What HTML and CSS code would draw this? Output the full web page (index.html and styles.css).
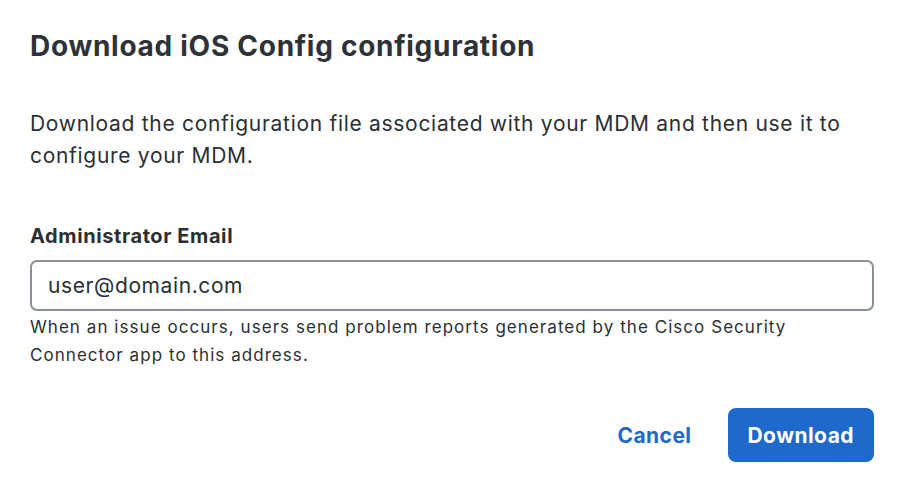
FILE: index.html
```html
<!DOCTYPE html>
<html>
<head>
<meta charset="utf-8">
<link rel="stylesheet" href="styles.css">
</head>
<body>
<div class="dialog">
  <h1 class="title">Download iOS Config configuration</h1>
  <p class="desc">Download the configuration file associated with your MDM and then use it to configure your MDM.</p>
  <div class="field">
    <label class="label" for="email">Administrator Email</label>
    <input class="input" id="email" type="text" value="user@domain.com">
    <p class="help">When an issue occurs, users send problem reports generated by the Cisco Security Connector app to this address.</p>
  </div>
  <div class="actions">
    <button class="btn btn-link">Cancel</button>
    <button class="btn btn-primary">Download</button>
  </div>
</div>
</body>
</html>
```
FILE: styles.css
```css
* { box-sizing: border-box; }
html, body { margin: 0; background: #fff; }
body {
  font-family: Inter, "Noto Sans", sans-serif;
  color: #2b2f33;
  width: 902px;
  height: 488px;
  overflow: hidden;
}
.dialog {
  padding: 26px 28px 0 30px;
  display: flex;
  flex-direction: column;
}
.title {
  margin: 0;
  font-size: 28px;
  font-weight: 700;
  line-height: 40px;
  letter-spacing: 0.72px;
  color: #2e3236;
}
.desc {
  margin: 42px 0 0;
  font-size: 21px;
  line-height: 32px;
  letter-spacing: 0.7px;
  max-width: 830px;
}
.field {
  margin-top: 50px;
  display: flex;
  flex-direction: column;
}
.label {
  font-size: 20px;
  font-weight: 700;
  line-height: 28px;
  letter-spacing: 0.6px;
}
.input {
  margin-top: 10px;
  height: 51px;
  width: 844px;
  border: 2px solid #8b9197;
  border-radius: 7px;
  padding: 0 16px;
  font-family: inherit;
  font-size: 21px;
  letter-spacing: 0.6px;
  color: #2b2f33;
  outline: none;
}
.help {
  margin: 2px 0 0;
  font-size: 17px;
  line-height: 28px;
  letter-spacing: 1.05px;
  max-width: 800px;
}
.actions {
  margin-top: 39px;
  display: flex;
  justify-content: flex-end;
  align-items: center;
  gap: 16px;
  width: 844px;
}
.btn {
  font-family: inherit;
  font-size: 21px;
  font-weight: 700;
  letter-spacing: 0.45px;
  border: none;
  border-radius: 8px;
  height: 54px;
  padding: 0 20px;
  cursor: pointer;
}
.btn-link {
  background: transparent;
  color: #1d69cc;
}
.btn-primary {
  background: #1d69cc;
  color: #fff;
}
```
